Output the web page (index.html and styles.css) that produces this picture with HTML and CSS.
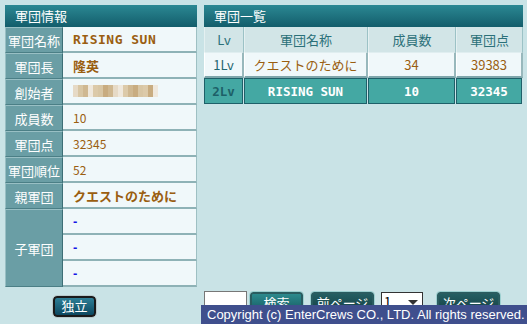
FILE: index.html
```html
<!DOCTYPE html>
<html lang="ja">
<head>
<meta charset="utf-8">
<link rel="stylesheet" href="styles.css">
</head>
<body>
<div class="page">
  <div class="left">
    <div class="panel-head">軍団情報</div>
    <div class="info">
      <div class="lab">軍団名称</div><div class="val bold latin">RISING SUN</div>
      <div class="lab">軍団長</div><div class="val bold">隆英</div>
      <div class="lab">創始者</div><div class="val"><span class="mosaic"><i class="m1"></i><i class="m2"></i><i class="m3"></i><i class="m4"></i><i class="m5"></i><i class="m2"></i><i class="m6"></i><i class="m3"></i><i class="m1"></i><i class="m4"></i><i class="m5"></i><i class="m3"></i><i class="m6"></i><i class="m2"></i><i class="m5"></i><i class="m6"></i><i class="m4"></i></span></div>
      <div class="lab">成員数</div><div class="val">10</div>
      <div class="lab">軍団点</div><div class="val">32345</div>
      <div class="lab">軍団順位</div><div class="val">52</div>
      <div class="lab">親軍団</div><div class="val bold">クエストのために</div>
      <div class="lab sub">子軍団</div>
      <div class="val link">-</div>
      <div class="val link">-</div>
      <div class="val link">-</div>
    </div>
    <div class="left-foot"><span class="btn-ind">独立</span></div>
  </div>
  <div class="right">
    <div class="panel-head">軍団一覧</div>
    <div class="list">
      <div class="th">Lv</div><div class="th">軍団名称</div><div class="th">成員数</div><div class="th">軍団点</div>
      <div class="td">1Lv</div><div class="td br">クエストのために</div><div class="td br">34</div><div class="td br">39383</div>
      <div class="tm lv">2Lv</div><div class="tm">RISING SUN</div><div class="tm">10</div><div class="tm">32345</div>
    </div>
    <div class="right-foot">
      <span class="inp"></span>
      <span class="btn b-search">検索</span>
      <span class="btn b-prev">前ページ</span>
      <span class="sel">1<span class="arrow"></span></span>
      <span class="btn b-next">次ページ</span>
    </div>
  </div>
</div>
<div class="copy">Copyright (c) EnterCrews CO., LTD. All rights reserved.</div>
</body>
</html>
```

FILE: styles.css
```css
html, body {
  margin: 0;
  padding: 0;
  background: #c9e3e6;
  width: 527px;
  height: 324px;
  overflow: hidden;
  font-family: "Noto Sans CJK JP", "Liberation Sans", sans-serif;
  font-size: 12px;
}
.page {
  display: flex;
  gap: 7px;
  padding: 5px 0 0 5px;
}
.left {
  width: 192px;
}
.right {
  width: 319px;
}
.panel-head {
  height: 22px;
  line-height: 21px;
  background: linear-gradient(#2b8893, #135d6b);
  color: #fff;
  font-size: 13px;
  padding-left: 10px;
}
.info {
  display: grid;
  grid-template-columns: 58px 134px;
  grid-auto-rows: 26px;
}
.lab {
  background: #6a9ea5;
  color: #fff;
  font-size: 13px;
  display: flex;
  align-items: center;
  justify-content: center;
  border-top: 1px solid #98bfc4;
  border-left: 1px solid #98bfc4;
  border-right: 1px solid #3d6f76;
  border-bottom: 1px solid #4b7f86;
  box-sizing: border-box;
}
.lab.sub {
  grid-row: span 3;
}
.val {
  background: #f0f8fa;
  color: #9a5e10;
  display: flex;
  align-items: center;
  padding-left: 10px;
  border-bottom: 2px solid #8eb2b6;
  border-right: 1px solid #9ec0c3;
  box-sizing: border-box;
}
.val.bold {
  font-weight: bold;
  font-size: 13px;
}
.val.latin {
  font-family: "DejaVu Sans Mono", monospace;
  letter-spacing: 0.5px;
}
.val.link {
  color: #1616e6;
  font-family: "Liberation Sans", Arial, sans-serif;
  font-weight: bold;
  font-size: 13px;
}
.mosaic {
  display: flex;
  height: 12px;
}
.mosaic i {
  display: block;
  width: 5px;
  height: 12px;
}
.m1 { background: #e6dac6; }
.m2 { background: #d8c6a4; }
.m3 { background: #cfb891; }
.m4 { background: #efe8dc; }
.m5 { background: #dccaa9; }
.m6 { background: #c8ac80; }
.left-foot {
  display: flex;
  padding: 9px 0 0 48px;
}
.btn-ind {
  width: 39px;
  height: 17px;
  border: 2px solid #1a1a1a;
  outline: 1px solid #b9c9cb;
  border-radius: 4px;
  background: linear-gradient(#2e7f96, #0c4860);
  color: #fff;
  font-size: 13px;
  line-height: 16px;
  text-align: center;
}
.list {
  display: grid;
  grid-template-columns: 40px 124px 88px 67px;
  grid-template-rows: 25px 26px 26px;
}
.th {
  background: #d2e5e7;
  color: #2b7079;
  font-size: 13px;
  display: flex;
  align-items: center;
  justify-content: center;
  border-right: 1px solid #9cc2c6;
  border-left: 1px solid #e4f0f1;
}
.td {
  background: #f0f8fa;
  color: #1f6770;
  font-size: 13px;
  display: flex;
  align-items: center;
  justify-content: center;
  border-top: 1px solid #e0eef0;
  border-left: 1px solid #ffffff;
  border-right: 2px solid #98b8bc;
  border-bottom: 2px solid #7fa6ab;
  box-sizing: border-box;
}
.td.br {
  color: #9a5e10;
}
.tm {
  background: #44a8a3;
  color: #fff;
  font-weight: bold;
  font-family: "DejaVu Sans Mono", "Noto Sans CJK JP", monospace;
  font-size: 12.5px;
  display: flex;
  align-items: center;
  justify-content: center;
  border: 1px solid #1e6069;
  margin-right: 1px;
  box-sizing: border-box;
}
.tm.lv {
  color: #1d6068;
}
.right-foot {
  display: flex;
  align-items: flex-start;
  padding-top: 187px;
}
.inp {
  width: 41px;
  height: 22px;
  background: #fff;
  border: 1px solid #777;
}
.btn {
  height: 18px;
  background: linear-gradient(#2c8a8d, #165a62);
  border: 2px solid #2a5c60;
  outline: 1px solid #9ccfd0;
  border-radius: 3px;
  color: #fff;
  font-size: 13px;
  line-height: 18px;
  text-align: center;
  margin-top: 1px;
}
.b-search { width: 49px; margin-left: 3px; }
.b-prev { width: 59px; margin-left: 8px; background: linear-gradient(#245e62, #153f43); }
.b-next { width: 59px; margin-left: 14px; background: linear-gradient(#245e62, #153f43); }
.sel {
  position: relative;
  height: 20px;
  margin-left: 7px;
  margin-top: 1px;
  background: #fff;
  border: 1px solid #333;
  font-size: 13px;
  line-height: 18px;
  padding-left: 2px;
  box-sizing: border-box;
  width: 42px;
}
.arrow {
  position: absolute;
  right: 4px;
  top: 7px;
  border-left: 5px solid transparent;
  border-right: 5px solid transparent;
  border-top: 5px solid #333;
}
.copy {
  position: absolute;
  left: 201px;
  top: 305px;
  width: 326px;
  height: 19px;
  background: #3f4f8d;
  color: #fff;
  font-family: "Liberation Sans", Arial, sans-serif;
  font-size: 13px;
  line-height: 19px;
  padding-left: 6px;
  box-sizing: border-box;
  white-space: nowrap;
}
```
